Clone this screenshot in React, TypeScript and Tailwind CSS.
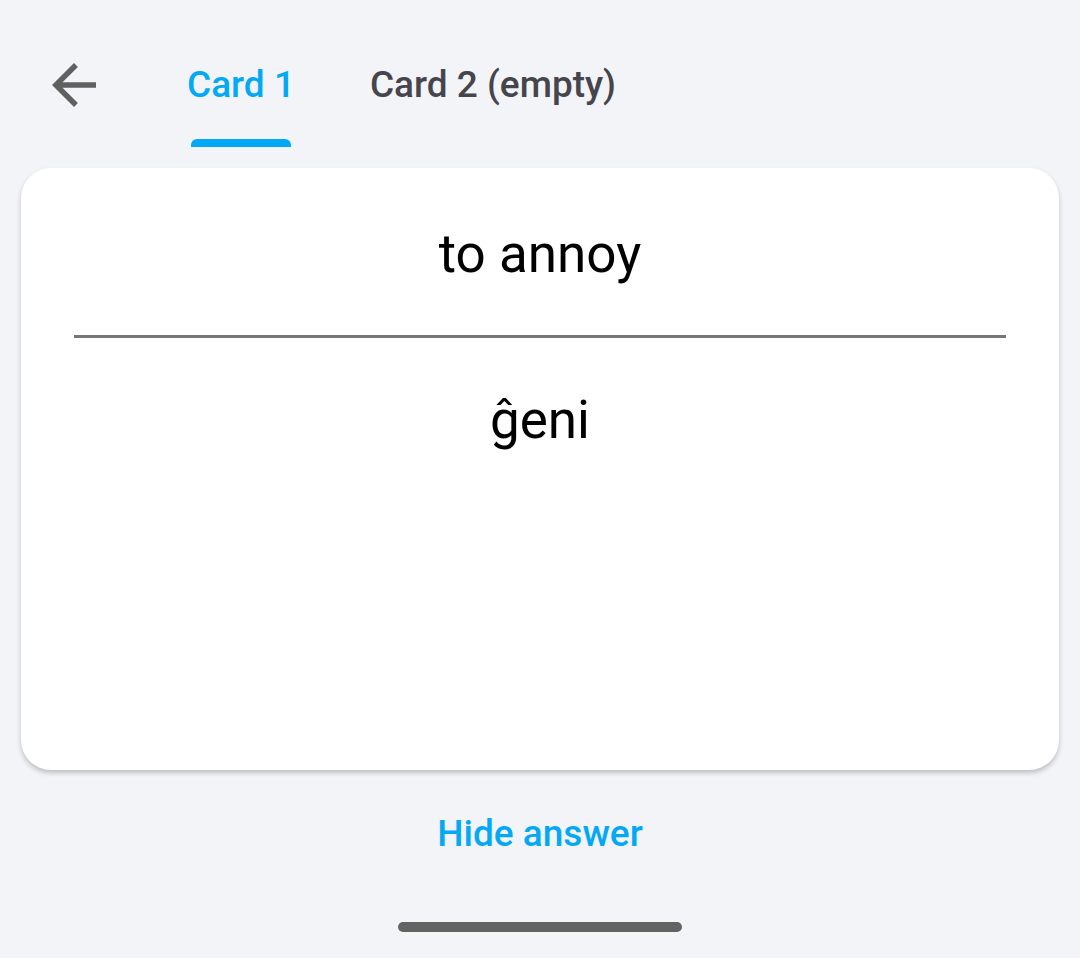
const App = () => {
  return (
    <div className="w-full h-[958px] bg-[#f3f4f8] font-['Roboto',sans-serif] flex flex-col overflow-hidden">
      {/* header with tabs */}
      <div className="flex items-start pl-[41px] pt-[52px] h-[147px]">
        <button className="w-[66px] h-[66px] text-[#606060]">
          <svg viewBox="0 0 24 24" className="w-[66px] h-[66px]" fill="currentColor">
            <path d="M20 11H7.83l5.59-5.59L12 4l-8 8 8 8 1.41-1.41L7.83 13H20v-2z" />
          </svg>
        </button>
        <div className="ml-[80px] mt-[8px] flex flex-col items-center">
          <span className="text-[37px] leading-[50px] font-medium text-[#03a9f4]">Card 1</span>
          <div className="mt-[29px] h-[8px] w-[100px] rounded-t-[6px] bg-[#03a9f4]" />
        </div>
        <div className="ml-[75px] mt-[8px]">
          <span className="text-[37px] leading-[50px] font-medium text-[#46454d]">Card 2 (empty)</span>
        </div>
      </div>

      {/* card */}
      <div className="mx-[21px] mt-[21px] h-[602px] rounded-[30px] bg-white shadow-[0_3px_5px_rgba(0,0,0,0.22)] flex flex-col">
        <div className="pt-[55px] text-center text-[53px] leading-[62px] text-black">to annoy</div>
        <div className="mt-[50px] mx-[53px] h-[3px] bg-[#777777]" />
        <div className="mt-[51px] text-center text-[53px] leading-[62px] text-black">ĝeni</div>
      </div>

      <button className="mt-[39px] self-center text-[37px] leading-[50px] font-medium text-[#03a9f4]">
        Hide answer
      </button>

      <div className="mt-[63px] self-center h-[10px] w-[284px] rounded-full bg-[#636363]" />
    </div>
  );
};

export default App;
